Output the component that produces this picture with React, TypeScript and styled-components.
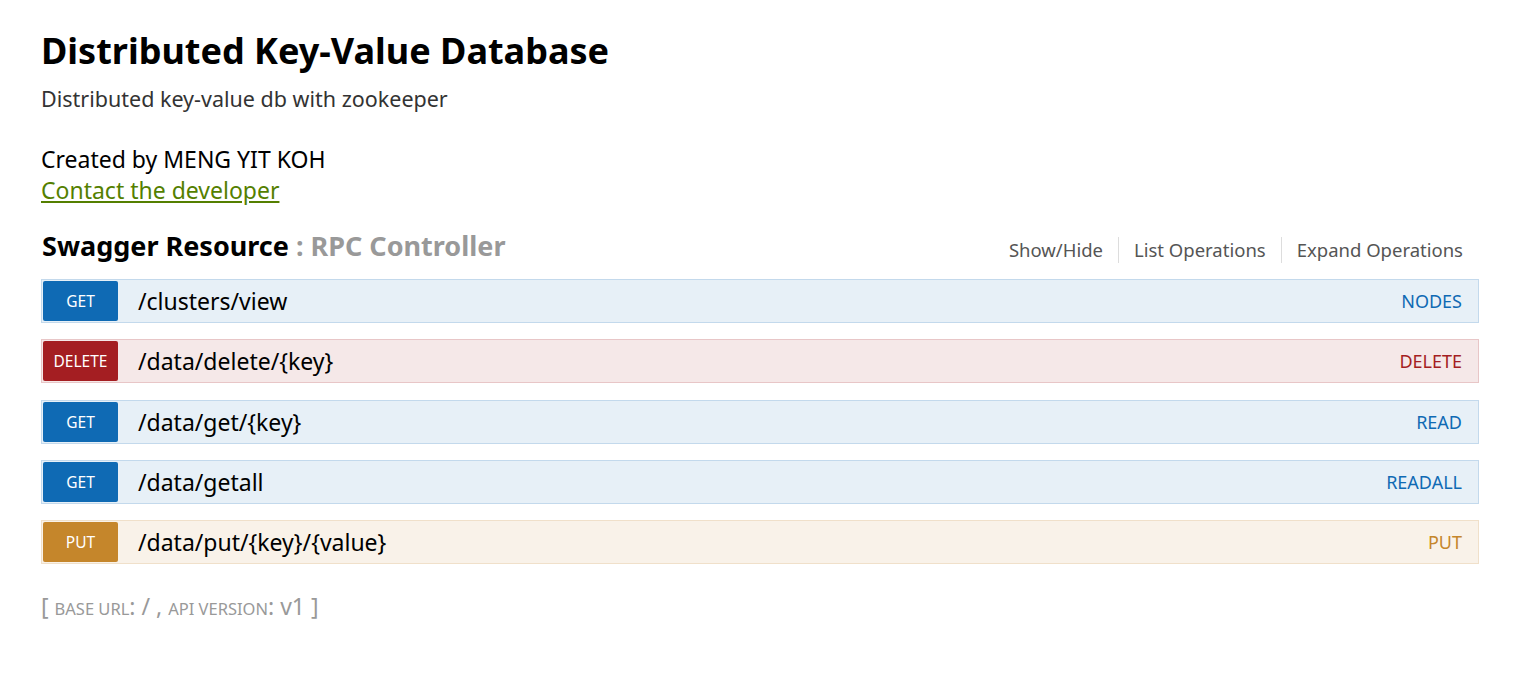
import React from "react";
import styled, { createGlobalStyle } from "styled-components";

const Global = createGlobalStyle`
  html, body { margin: 0; padding: 0; background: #fff; }
  body { font-family: "Noto Sans", "Open Sans", sans-serif; color: #000; }
`;

const Page = styled.div`
  padding: 26px 41px 40px 41px;
`;

const Title = styled.h1`
  margin: 0;
  font-size: 36px;
  font-weight: 700;
  line-height: 50px;
`;

const Subtitle = styled.div`
  margin-top: 9px;
  font-size: 21.5px;
  line-height: 28px;
  color: #333;
`;

const Author = styled.div`
  margin-top: 30px;
  font-size: 23px;
  line-height: 32px;
`;

const Contact = styled.a`
  display: inline-block;
  font-size: 23px;
  line-height: 30px;
  color: #547f00;
  text-decoration: underline;
`;

const ResourceHeader = styled.div`
  display: flex;
  align-items: flex-end;
  justify-content: space-between;
  margin-top: 24px;
  margin-bottom: 16px;
`;

const ResourceTitle = styled.h2`
  margin: 0 0 0 1px;
  font-size: 27px;
  font-weight: 700;
  line-height: 34px;
`;

const ResourceSub = styled.span`
  color: #999;
`;

const Links = styled.ul`
  display: flex;
  list-style: none;
  margin: 0 16px 0 0;
  padding: 0;
`;

const LinkItem = styled.li`
  font-size: 18.5px;
  line-height: 26px;
  color: #555;
  padding: 0 15px;
  border-right: 1px solid #ddd;
  &:first-child { padding-left: 0; }
  &:last-child { padding-right: 0; border-right: none; }
`;

type Method = "get" | "delete" | "put";

const palette: Record<Method, { bg: string; border: string; badge: string; label: string }> = {
  get: { bg: "#e7f0f7", border: "#c3d9ec", badge: "#0f6ab4", label: "#0f6ab4" },
  delete: { bg: "#f5e8e8", border: "#e8c6c7", badge: "#a41e22", label: "#a41e22" },
  put: { bg: "#f9f2e9", border: "#f0e0ca", badge: "#c5862b", label: "#c5862b" },
};

const Ops = styled.div`
  display: flex;
  flex-direction: column;
  gap: 16.3px;
`;

const OpRow = styled.div<{ $m: Method }>`
  display: flex;
  align-items: center;
  height: 40px;
  padding: 1px;
  background: ${(p) => palette[p.$m].bg};
  border: 1px solid ${(p) => palette[p.$m].border};
`;

const Badge = styled.span<{ $m: Method }>`
  display: flex;
  align-items: center;
  justify-content: center;
  width: 75px;
  height: 100%;
  border-radius: 2px;
  background: ${(p) => palette[p.$m].badge};
  color: #fff;
  font-size: 15.5px;
  text-transform: uppercase;
`;

const Path = styled.span`
  flex: 1;
  padding-left: 20px;
  font-size: 23px;
  color: #000;
`;

const OpLabel = styled.span<{ $m: Method }>`
  padding-right: 15px;
  font-size: 18px;
  color: ${(p) => palette[p.$m].label};
  text-transform: uppercase;
`;

const Footer = styled.div`
  margin-top: 26px;
  font-size: 23px;
  color: #999;
`;

const Small = styled.span`
  font-size: 16.5px;
  text-transform: uppercase;
`;

const ops: { m: Method; path: string; label: string }[] = [
  { m: "get", path: "/clusters/view", label: "nodes" },
  { m: "delete", path: "/data/delete/{key}", label: "delete" },
  { m: "get", path: "/data/get/{key}", label: "read" },
  { m: "get", path: "/data/getall", label: "readall" },
  { m: "put", path: "/data/put/{key}/{value}", label: "put" },
];

export default function App() {
  return (
    <Page>
      <Global />
      <Title>Distributed Key-Value Database</Title>
      <Subtitle>Distributed key-value db with zookeeper</Subtitle>
      <Author>Created by MENG YIT KOH</Author>
      <Contact href="#">Contact the developer</Contact>
      <ResourceHeader>
        <ResourceTitle>
          Swagger Resource <ResourceSub>: RPC Controller</ResourceSub>
        </ResourceTitle>
        <Links>
          <LinkItem>Show/Hide</LinkItem>
          <LinkItem>List Operations</LinkItem>
          <LinkItem>Expand Operations</LinkItem>
        </Links>
      </ResourceHeader>
      <Ops>
        {ops.map((o) => (
          <OpRow key={o.path} $m={o.m}>
            <Badge $m={o.m}>{o.m}</Badge>
            <Path>{o.path}</Path>
            <OpLabel $m={o.m}>{o.label}</OpLabel>
          </OpRow>
        ))}
      </Ops>
      <Footer>
        [ <Small>base url</Small>: / , <Small>api version</Small>: v1 ]
      </Footer>
    </Page>
  );
}
